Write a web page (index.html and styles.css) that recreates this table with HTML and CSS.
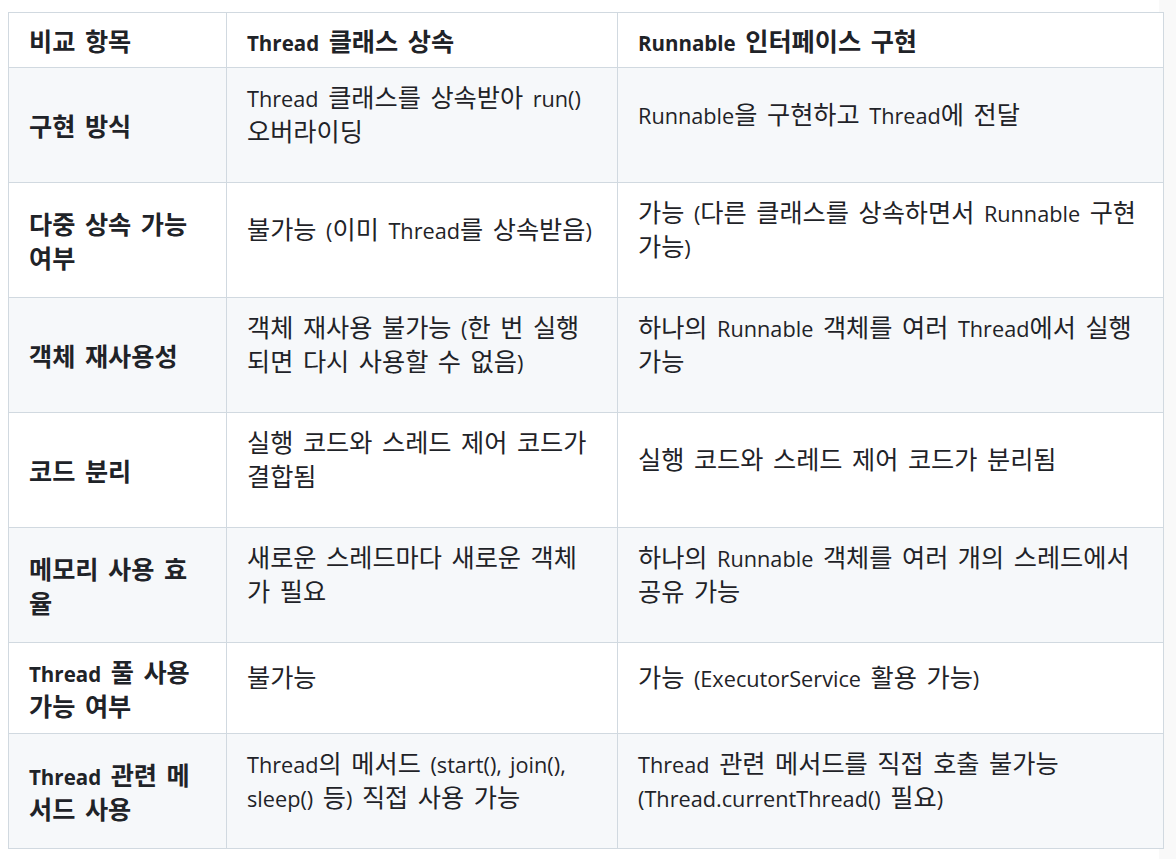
FILE: index.html
```html
<!DOCTYPE html>
<html lang="ko">
<head>
<meta charset="utf-8">
<title>Thread vs Runnable</title>
<link rel="stylesheet" href="styles.css">
</head>
<body>
<div class="page">
  <table class="cmp">
    <colgroup>
      <col class="c1"><col class="c2"><col class="c3">
    </colgroup>
    <thead>
      <tr class="head">
        <th>비교 항목</th>
        <th><span class="en">Thread</span> 클래스 상속</th>
        <th><span class="en">Runnable</span> 인터페이스 구현</th>
      </tr>
    </thead>
    <tbody>
      <tr class="alt">
        <td class="key">구현 방식</td>
        <td><div class="val"><span class="en">Thread</span> 클래스를 상속받아 <span class="en">run()</span> 오버라이딩</div></td>
        <td><div class="val"><span class="en">Runnable</span>을 구현하고 <span class="en">Thread</span>에 전달</div></td>
      </tr>
      <tr>
        <td class="key">다중 상속 가능 여부</td>
        <td><div class="val">불가능 <span class="en">(</span>이미 <span class="en">Thread</span>를 상속받음<span class="en">)</span></div></td>
        <td><div class="val">가능 <span class="en">(</span>다른 클래스를 상속하면서 <span class="en">Runnable</span> 구현 가능<span class="en">)</span></div></td>
      </tr>
      <tr class="alt">
        <td class="key">객체 재사용성</td>
        <td><div class="val">객체 재사용 불가능 <span class="en">(</span>한 번 실행되면 다시 사용할 수 없음<span class="en">)</span></div></td>
        <td><div class="val">하나의 <span class="en">Runnable</span> 객체를 여러 <span class="en">Thread</span>에서 실행 가능</div></td>
      </tr>
      <tr>
        <td class="key">코드 분리</td>
        <td><div class="val">실행 코드와 스레드 제어 코드가 결합됨</div></td>
        <td><div class="val">실행 코드와 스레드 제어 코드가 분리됨</div></td>
      </tr>
      <tr class="alt">
        <td class="key">메모리 사용 효율</td>
        <td><div class="val">새로운 스레드마다 새로운 객체가 필요</div></td>
        <td><div class="val">하나의 <span class="en">Runnable</span> 객체를 여러 개의 스레드에서 공유 가능</div></td>
      </tr>
      <tr>
        <td class="key"><span class="en">Thread</span> 풀 사용 가능 여부</td>
        <td><div class="val">불가능</div></td>
        <td><div class="val">가능 <span class="en">(ExecutorService</span> 활용 가능<span class="en">)</span></div></td>
      </tr>
      <tr class="alt">
        <td class="key"><span class="en">Thread</span> 관련 메서드 사용</td>
        <td><div class="val"><span class="en">Thread</span>의 메서드 <span class="en">(start(), join(), sleep()</span> 등<span class="en">)</span> 직접 사용 가능</div></td>
        <td><div class="val"><span class="en">Thread</span> 관련 메서드를 직접 호출 불가능 <span class="en">(Thread.currentThread()</span> 필요<span class="en">)</span></div></td>
      </tr>
    </tbody>
  </table>
</div>
</body>
</html>
```

FILE: styles.css
```css
html, body {
  margin: 0;
  padding: 0;
}
body {
  background: linear-gradient(to right, #ffffff 1159px, #f9f9f9 1159px);
  font-family: "Noto Sans CJK KR", sans-serif;
  color: #1f2328;
  font-size: 25.2px;
  line-height: 34px;
  word-spacing: 2.5px;
}
.en {
  font-family: "Open Sans", "Noto Sans CJK KR", sans-serif;
  font-size: 21.7px;
  line-height: 20px;
  word-spacing: 2.5px;
}
.page {
  padding: 12px 8px 0 8px;
}
.cmp {
  border-collapse: collapse;
  table-layout: fixed;
  width: 1155px;
}
.c1 { width: 218px; }
.c2 { width: 391px; }
.c3 { width: 546px; }
.cmp th, .cmp td {
  border: 1px solid #d1d9e0;
  padding: 11px 24px 11px 20px;
  text-align: left;
  vertical-align: middle;
}
.cmp th {
  font-weight: 700;
  padding-top: 10px;
  padding-bottom: 10px;
}
.cmp th .en, .key .en {
  font-size: 20.5px;
}
.cmp tr { background: #ffffff; }
.cmp tr.alt { background: #f6f8fa; }
.key { font-weight: 700; }
.val { padding-bottom: 24px; }
```
